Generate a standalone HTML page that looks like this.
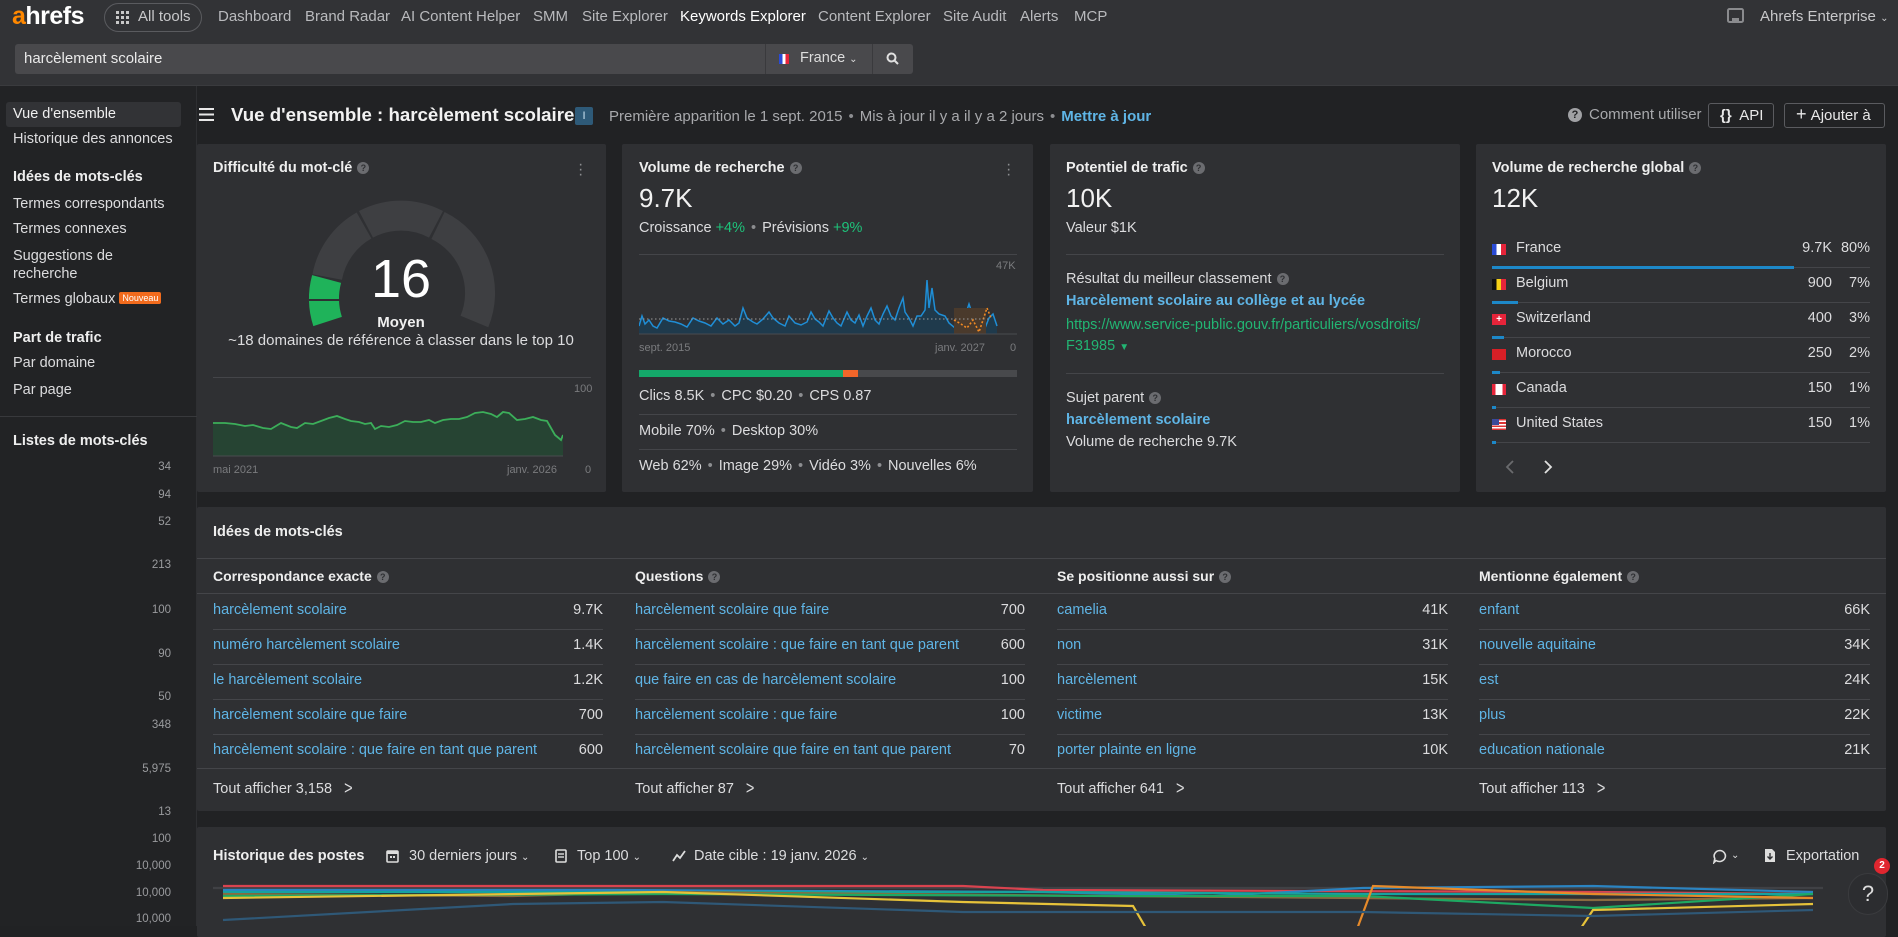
<!DOCTYPE html>
<html><head><meta charset="utf-8"><style>
*{box-sizing:border-box;margin:0;padding:0}
body{width:1898px;height:926px;overflow:hidden;background:#212224;font-family:"Liberation Sans",sans-serif;color:#e4e4e6;position:relative;font-size:15px;line-height:1.3}
.a{position:absolute;white-space:nowrap}
.hdr{position:absolute;left:0;top:0;width:1898px;height:86px;background:#323336;border-bottom:1px solid #3a3b3e}
.nav{top:7px;font-size:15px;color:#b9babd}
.side{position:absolute;left:0;top:86px;width:197px;height:840px;background:#222325;border-right:1px solid #2e2f32}
.si{font-size:14.5px;color:#dcdcde;left:13px}
.sh{font-size:14.5px;font-weight:bold;color:#eee;left:13px}
.num{font-size:11.5px;color:#9a9b9e;right:1727px;text-align:right}
.card{position:absolute;background:#2f3033;border-radius:2px}
.ct{font-size:14.5px;font-weight:bold;color:#eee}
.q{display:inline-block;width:12px;height:12px;border-radius:50%;background:#6b6c70;color:#2f3033;font-size:9px;text-align:center;line-height:12px;font-weight:bold;vertical-align:1px;margin-left:5px}
.big{font-size:26px;color:#f2f2f2}
.t{font-size:14.5px;color:#dcdcde}
.m{color:#8c8d90}
.g{color:#1ec27a}
.lk{color:#5fb5e6}
.hl{position:absolute;height:1px;background:#444549}
.dot{color:#8c8d90;margin:0 6px}
.v{font-size:14.5px;color:#dcdcde;text-align:right}
.btn{position:absolute;border:1px solid #5a5b5f;border-radius:3px;font-size:15px;color:#e8e8e8}
.dots{position:absolute;color:#8c8d90;font-size:16px;line-height:5px;width:4px}
</style></head><body>
<div class="hdr"></div>
<div class="a" style="left:12px;top:0px;font-size:25px;font-weight:bold;color:#fff;letter-spacing:-0.5px"><span style="color:#ff8800">a</span>hrefs</div>
<div class="a" style="left:104px;top:3px;width:98px;height:29px;border:1px solid #5a5b5f;border-radius:15px"></div>
<svg class="a" style="left:116px;top:11px" width="13" height="13" viewBox="0 0 13 13" fill="#c8c8c8"><rect x="0" y="0" width="3" height="3"/><rect x="5" y="0" width="3" height="3"/><rect x="10" y="0" width="3" height="3"/><rect x="0" y="5" width="3" height="3"/><rect x="5" y="5" width="3" height="3"/><rect x="10" y="5" width="3" height="3"/><rect x="0" y="10" width="3" height="3"/><rect x="5" y="10" width="3" height="3"/><rect x="10" y="10" width="3" height="3"/></svg>
<div class="a nav" style="left:138px;color:#c8c8ca">All tools</div>
<div class="a nav" style="left:218px">Dashboard</div>
<div class="a nav" style="left:305px">Brand Radar</div>
<div class="a nav" style="left:401px">AI Content Helper</div>
<div class="a nav" style="left:533px">SMM</div>
<div class="a nav" style="left:582px">Site Explorer</div>
<div class="a nav" style="left:680px;color:#fff">Keywords Explorer</div>
<div class="a nav" style="left:818px">Content Explorer</div>
<div class="a nav" style="left:943px">Site Audit</div>
<div class="a nav" style="left:1020px">Alerts</div>
<div class="a nav" style="left:1074px">MCP</div>
<svg class="a" style="left:1727px;top:8px" width="17" height="16" viewBox="0 0 17 16"><rect x="1" y="1" width="15" height="13" rx="1.5" fill="none" stroke="#8a8b8e" stroke-width="2"/><rect x="5" y="10" width="7" height="4" fill="#8a8b8e"/></svg>
<div class="a nav" style="left:1760px;color:#c8c8ca">Ahrefs Enterprise <span style="font-size:10px">⌄</span></div>

<div class="a" style="left:15px;top:44px;width:750px;height:30px;background:#49494c;border-radius:3px 0 0 3px"></div>
<div class="a" style="left:24px;top:49px;font-size:15px;color:#eaeaea">harcèlement scolaire</div>
<div class="a" style="left:765px;top:44px;width:107px;height:30px;background:#49494c;border-left:1px solid #3a3a3d"></div>
<div class="a" style="left:779px;top:54px;width:10px;height:10px;background:linear-gradient(90deg,#2a4bd6 33%,#fff 33% 66%,#e6243a 66%)"></div>
<div class="a" style="left:800px;top:49px;font-size:14.5px;color:#ddd">France <span style="font-size:10px">⌄</span></div>
<div class="a" style="left:872px;top:44px;width:41px;height:30px;background:#49494c;border-left:1px solid #3a3a3d;border-radius:0 3px 3px 0"></div>
<svg class="a" style="left:886px;top:52px" width="13" height="13" viewBox="0 0 13 13"><circle cx="5.5" cy="5.5" r="4" fill="none" stroke="#e0e0e0" stroke-width="2"/><line x1="8.5" y1="8.5" x2="12" y2="12" stroke="#e0e0e0" stroke-width="2"/></svg>

<div class="side"></div>
<div class="a" style="left:6px;top:102px;width:175px;height:25px;background:#323336;border-radius:3px"></div>
<div class="a si" style="top:105px;color:#f0f0f0">Vue d'ensemble</div>
<div class="a si" style="top:130px">Historique des annonces</div>
<div class="a sh" style="top:168px">Idées de mots-clés</div>
<div class="a si" style="top:195px">Termes correspondants</div>
<div class="a si" style="top:220px">Termes connexes</div>
<div class="a si" style="top:247px">Suggestions de</div>
<div class="a si" style="top:265px">recherche</div>
<div class="a si" style="top:290px">Termes globaux <span style="background:#f26b1d;color:#fff;font-size:9px;padding:1px 3px;border-radius:2px;vertical-align:2px">Nouveau</span></div>
<div class="a sh" style="top:329px">Part de trafic</div>
<div class="a si" style="top:354px">Par domaine</div>
<div class="a si" style="top:381px">Par page</div>
<div class="hl" style="left:0;top:416px;width:197px;background:#38393c"></div>
<div class="a sh" style="top:432px">Listes de mots-clés</div>
<div class="a num" style="top:460px">34</div><div class="a num" style="top:488px">94</div><div class="a num" style="top:515px">52</div><div class="a num" style="top:558px">213</div><div class="a num" style="top:603px">100</div><div class="a num" style="top:647px">90</div><div class="a num" style="top:690px">50</div><div class="a num" style="top:718px">348</div><div class="a num" style="top:762px">5,975</div><div class="a num" style="top:805px">13</div><div class="a num" style="top:832px">100</div><div class="a num" style="top:859px">10,000</div><div class="a num" style="top:886px">10,000</div><div class="a num" style="top:912px">10,000</div>

<!-- title row -->
<svg class="a" style="left:199px;top:108px" width="15" height="13" viewBox="0 0 15 13" fill="#e8e8e8"><rect y="0" width="15" height="2"/><rect y="5.5" width="15" height="2"/><rect y="11" width="15" height="2"/></svg>
<div class="a" style="left:231px;top:103px;font-size:18.7px;font-weight:bold;color:#f2f2f2">Vue d'ensemble : harcèlement scolaire</div>
<div class="a" style="left:575px;top:107px;width:18px;height:18px;background:#2e5a78;border-radius:2px;color:#cfe6f5;font-size:11px;text-align:center;line-height:18px">I</div>
<div class="a" style="left:609px;top:107px;font-size:15px;color:#a8a9ac">Première apparition le 1 sept. 2015<span class="dot">•</span>Mis à jour il y a il y a 2 jours<span class="dot">•</span><b style="color:#5fb5e6">Mettre à jour</b></div>
<div class="a" style="left:1568px;top:108px;width:14px;height:14px;border-radius:50%;background:#a0a1a4;color:#212224;font-size:11px;font-weight:bold;text-align:center;line-height:14px">?</div>
<div class="a" style="left:1589px;top:105px;font-size:15px;color:#a8a9ac">Comment utiliser</div>
<div class="btn" style="left:1708px;top:103px;width:66px;height:25px"><span class="a" style="left:11px;top:2px"><b>{}</b>&nbsp; API</span></div>
<div class="btn" style="left:1784px;top:103px;width:101px;height:25px"><span class="a" style="left:11px;top:1px"><span style="font-size:18px;line-height:18px">+</span>&nbsp;Ajouter à</span></div>

<!-- card 1 -->
<div class="card" style="left:197px;top:144px;width:409px;height:348px"></div>
<div class="a ct" style="left:213px;top:159px">Difficulté du mot-clé<span class="q">?</span></div>
<div class="dots" style="left:578px;top:162px">·<br>·<br>·</div>
<svg class="a" style="left:301px;top:191px" width="200" height="150" viewBox="0 0 200 150">
<g fill="none" stroke-width="30">
<path d="M26.6 130.5 A75 75 0 0 1 25.6 88" stroke="#1fb35a"/>
<path d="M26.2 86 A75 75 0 0 1 63 34.5" stroke="#3e3f42"/>
<path d="M65 33.3 A75 75 0 0 1 135 33.3" stroke="#3e3f42"/>
<path d="M137 34.5 A75 75 0 0 1 173.4 130.5" stroke="#3e3f42"/>
</g>
<line x1="8" y1="109" x2="42" y2="109" stroke="#2f3033" stroke-width="2"/>
</svg>
<div class="a" style="left:401px;top:248px;transform:translateX(-50%);font-size:54px;color:#fff;line-height:1.15">16</div>
<div class="a" style="left:401px;top:313px;transform:translateX(-50%);font-size:15px;font-weight:bold;color:#f0f0f0">Moyen</div>
<div class="a" style="left:401px;top:331px;transform:translateX(-50%);font-size:15px;color:#dcdcde">~18 domaines de référence à classer dans le top 10</div>
<div class="hl" style="left:213px;top:377px;width:378px"></div>
<div class="a" style="left:574px;top:382px;font-size:11px;color:#7a7b7e">100</div>
<svg class="a" style="left:213px;top:410px" width="350" height="48" viewBox="0 0 350 48">
<path d="M0 13 L12 13 L22 14 L32 16 L40 15 L50 18 L58 19 L68 13 L78 17 L84 18 L92 13 L100 14 L108 11 L116 8 L124 6 L132 9 L138 11 L146 12 L152 14 L158 13 L162 19 L168 16 L176 17 L184 15 L192 11 L200 12 L208 12 L216 10 L222 13 L230 10 L238 9 L246 9 L254 7 L262 3 L270 2 L278 4 L284 7 L290 2 L296 3 L304 10 L312 9 L320 7 L328 10 L334 11 L342 25 L348 30 L350 25 L350 46 L0 46Z" fill="#264433"/>
<polyline points="0,13 12,13 22,14 32,16 40,15 50,18 58,19 68,13 78,17 84,18 92,13 100,14 108,11 116,8 124,6 132,9 138,11 146,12 152,14 158,13 162,19 168,16 176,17 184,15 192,11 200,12 208,12 216,10 222,13 230,10 238,9 246,9 254,7 262,3 270,2 278,4 284,7 290,2 296,3 304,10 312,9 320,7 328,10 334,11 342,25 348,30 350,25" fill="none" stroke="#3cae5a" stroke-width="1.8"/>
<line x1="0" y1="46" x2="378" y2="46" stroke="#4a4b4f"/>
</svg>
<div class="a" style="left:213px;top:463px;font-size:11px;color:#7a7b7e">mai 2021</div>
<div class="a" style="left:507px;top:463px;font-size:11px;color:#7a7b7e">janv. 2026</div>
<div class="a" style="left:585px;top:463px;font-size:11px;color:#7a7b7e">0</div>

<!-- card 2 -->
<div class="card" style="left:622px;top:144px;width:411px;height:348px"></div>
<div class="a ct" style="left:639px;top:159px">Volume de recherche<span class="q">?</span></div>
<div class="dots" style="left:1006px;top:162px">·<br>·<br>·</div>
<div class="a big" style="left:639px;top:182px">9.7K</div>
<div class="a t" style="left:639px;top:219px">Croissance <span class="g">+4%</span><span class="dot">•</span>Prévisions <span class="g">+9%</span></div>
<div class="hl" style="left:639px;top:254px;width:378px"></div>
<div class="a" style="left:996px;top:259px;font-size:11px;color:#7a7b7e">47K</div>
<svg class="a" style="left:639px;top:268px" width="380" height="68" viewBox="0 0 380 68">
<path d="M0 58 L3 48 L6 56 L10 52 L14 58 L18 60 L24 50 L30 53 L36 54 L42 56 L48 59 L54 50 L60 53 L66 55 L72 58 L78 50 L84 56 L90 52 L96 58 L100 55 L104 40 L108 50 L114 54 L118 56 L124 51 L130 44 L134 50 L140 55 L146 58 L150 48 L156 55 L162 57 L168 54 L172 44 L176 51 L180 54 L184 58 L190 43 L194 50 L198 55 L202 58 L208 44 L212 52 L216 55 L220 47 L224 58 L228 48 L232 40 L236 52 L240 56 L244 46 L248 38 L252 48 L256 52 L260 40 L264 30 L266 44 L270 50 L274 58 L278 48 L282 48 L286 42 L288 12 L290 40 L293 20 L296 42 L300 46 L306 48 L310 55 L316 60 L322 56 L326 48 L330 36 L334 48 L338 56 L342 56 L346 60 L350 50 L354 46 L358 58 L358 66 L0 66Z" fill="#1f3a4c"/>
<polyline points="0,58 3,48 6,56 10,52 14,58 18,60 24,50 30,53 36,54 42,56 48,59 54,50 60,53 66,55 72,58 78,50 84,56 90,52 96,58 100,55 104,40 108,50 114,54 118,56 124,51 130,44 134,50 140,55 146,58 150,48 156,55 162,57 168,54 172,44 176,51 180,54 184,58 190,43 194,50 198,55 202,58 208,44 212,52 216,55 220,47 224,58 228,48 232,40 236,52 240,56 244,46 248,38 252,48 256,52 260,40 264,30 266,44 270,50 274,58 278,48 282,48 286,42 288,12 290,40 293,20 296,42 300,46 306,48 310,55 316,60 322,56 326,48 330,36 334,48 338,56 342,56 346,60 350,50 354,46 358,58" fill="none" stroke="#1f8ed6" stroke-width="1.5"/>
<rect x="315" y="40" width="32" height="26" fill="#4a3a2c"/>
<polyline points="315,52 322,56 328,60 334,52 340,64 344,52 348,40 352,50" fill="none" stroke="#f08a24" stroke-width="1.6" stroke-dasharray="2 2"/>
<line x1="0" y1="51" x2="350" y2="51" stroke="#9a9a9a" stroke-dasharray="1.5 2.5"/>
<line x1="0" y1="66" x2="378" y2="66" stroke="#4a4b4f"/>
</svg>
<div class="a" style="left:639px;top:341px;font-size:11px;color:#7a7b7e">sept. 2015</div>
<div class="a" style="left:935px;top:341px;font-size:11px;color:#7a7b7e">janv. 2027</div>
<div class="a" style="left:1010px;top:341px;font-size:11px;color:#7a7b7e">0</div>
<div class="a" style="left:639px;top:370px;width:378px;height:7px;background:#48494c"></div>
<div class="a" style="left:639px;top:370px;width:204px;height:7px;background:#14a86a"></div>
<div class="a" style="left:843px;top:370px;width:15px;height:7px;background:#f2662a"></div>
<div class="a t" style="left:639px;top:387px">Clics 8.5K<span class="dot">•</span>CPC $0.20<span class="dot">•</span>CPS 0.87</div>
<div class="hl" style="left:639px;top:414px;width:378px"></div>
<div class="a t" style="left:639px;top:422px">Mobile 70%<span class="dot">•</span>Desktop 30%</div>
<div class="hl" style="left:639px;top:449px;width:378px"></div>
<div class="a t" style="left:639px;top:457px">Web 62%<span class="dot">•</span>Image 29%<span class="dot">•</span>Vidéo 3%<span class="dot">•</span>Nouvelles 6%</div>

<!-- card 3 -->
<div class="card" style="left:1050px;top:144px;width:410px;height:348px"></div>
<div class="a ct" style="left:1066px;top:159px">Potentiel de trafic<span class="q">?</span></div>
<div class="a big" style="left:1066px;top:182px">10K</div>
<div class="a t" style="left:1066px;top:219px">Valeur $1K</div>
<div class="hl" style="left:1066px;top:254px;width:378px"></div>
<div class="a t" style="left:1066px;top:270px">Résultat du meilleur classement<span class="q">?</span></div>
<div class="a t lk" style="left:1066px;top:292px;font-weight:bold">Harcèlement scolaire au collège et au lycée</div>
<div class="a t g" style="left:1066px;top:316px;color:#22b573">https://www.service-public.gouv.fr/particuliers/vosdroits/</div>
<div class="a t g" style="left:1066px;top:337px;color:#22b573">F31985 <span style="font-size:10px">▼</span></div>
<div class="hl" style="left:1066px;top:373px;width:378px"></div>
<div class="a t" style="left:1066px;top:389px">Sujet parent<span class="q">?</span></div>
<div class="a t lk" style="left:1066px;top:411px;font-weight:bold">harcèlement scolaire</div>
<div class="a t" style="left:1066px;top:433px">Volume de recherche 9.7K</div>

<!-- card 4 -->
<div class="card" style="left:1476px;top:144px;width:410px;height:348px"></div>
<div class="a ct" style="left:1492px;top:159px">Volume de recherche global<span class="q">?</span></div>
<div class="a big" style="left:1492px;top:182px">12K</div>
<div style="position:absolute;left:1492px;top:240px;width:378px">
 <div class="hl" style="left:0;top:27px;width:378px"></div><div class="a" style="left:0;top:26px;width:302px;height:3px;background:#1d88c8"></div>
 <div class="hl" style="left:0;top:62px;width:378px"></div><div class="a" style="left:0;top:61px;width:26px;height:3px;background:#1d88c8"></div>
 <div class="hl" style="left:0;top:97px;width:378px"></div><div class="a" style="left:0;top:96px;width:12px;height:3px;background:#1d88c8"></div>
 <div class="hl" style="left:0;top:132px;width:378px"></div><div class="a" style="left:0;top:131px;width:8px;height:3px;background:#1d88c8"></div>
 <div class="hl" style="left:0;top:167px;width:378px"></div><div class="a" style="left:0;top:166px;width:4px;height:3px;background:#1d88c8"></div>
 <div class="hl" style="left:0;top:202px;width:378px"></div><div class="a" style="left:0;top:201px;width:4px;height:3px;background:#1d88c8"></div>
</div>
<div class="a" style="left:1492px;top:244px;width:14px;height:11px;background:linear-gradient(90deg,#2a4bd6 33%,#fff 33% 66%,#e6243a 66%)"></div>
<div class="a" style="left:1492px;top:279px;width:14px;height:11px;background:linear-gradient(90deg,#111 33%,#f7d117 33% 66%,#e6243a 66%)"></div>
<div class="a" style="left:1492px;top:314px;width:14px;height:11px;background:#e6243a;color:#fff;font-size:10px;line-height:11px;text-align:center;font-weight:bold">+</div>
<div class="a" style="left:1492px;top:349px;width:14px;height:11px;background:#d81f26"></div>
<div class="a" style="left:1492px;top:384px;width:14px;height:11px;background:linear-gradient(90deg,#e6243a 25%,#fff 25% 75%,#e6243a 75%)"></div>
<div class="a" style="left:1492px;top:419px;width:14px;height:11px;background:repeating-linear-gradient(180deg,#d33 0 1.6px,#fff 1.6px 3.2px)"><div style="width:7px;height:6px;background:#3b4a9a"></div></div>
<div class="a t" style="left:1516px;top:239px">France</div><div class="a v" style="right:66px;top:239px">9.7K</div><div class="a v m" style="right:28px;top:239px">80%</div>
<div class="a t" style="left:1516px;top:274px">Belgium</div><div class="a v" style="right:66px;top:274px">900</div><div class="a v m" style="right:28px;top:274px">7%</div>
<div class="a t" style="left:1516px;top:309px">Switzerland</div><div class="a v" style="right:66px;top:309px">400</div><div class="a v m" style="right:28px;top:309px">3%</div>
<div class="a t" style="left:1516px;top:344px">Morocco</div><div class="a v" style="right:66px;top:344px">250</div><div class="a v m" style="right:28px;top:344px">2%</div>
<div class="a t" style="left:1516px;top:379px">Canada</div><div class="a v" style="right:66px;top:379px">150</div><div class="a v m" style="right:28px;top:379px">1%</div>
<div class="a t" style="left:1516px;top:414px">United States</div><div class="a v" style="right:66px;top:414px">150</div><div class="a v m" style="right:28px;top:414px">1%</div>
<svg class="a" style="left:1504px;top:459px" width="50" height="16" viewBox="0 0 50 16" fill="none" stroke-width="1.8"><path d="M9 2 L3 8 L9 14" stroke="#6a6b6e"/><path d="M41 2 L47 8 L41 14" stroke="#e0e0e0"/></svg>

<!-- ideas -->
<div class="card" style="left:197px;top:507px;width:1689px;height:304px"></div>
<div class="a ct" style="left:213px;top:523px">Idées de mots-clés</div>
<div class="hl" style="left:197px;top:558px;width:1689px"></div>
<div class="hl" style="left:197px;top:593px;width:1689px"></div>
<div class="hl" style="left:197px;top:768px;width:1689px"></div>
<div class="a ct" style="left:213px;top:567px;font-size:14px">Correspondance exacte<span class="q">?</span></div>
<div class="a ct" style="left:635px;top:567px;font-size:14px">Questions<span class="q">?</span></div>
<div class="a ct" style="left:1057px;top:567px;font-size:14px">Se positionne aussi sur<span class="q">?</span></div>
<div class="a ct" style="left:1479px;top:567px;font-size:14px">Mentionne également<span class="q">?</span></div>
<div id="cols"></div>
<script>
var cols=[[213,603,[["harcèlement scolaire","9.7K"],["numéro harcèlement scolaire","1.4K"],["le harcèlement scolaire","1.2K"],["harcèlement scolaire que faire","700"],["harcèlement scolaire : que faire en tant que parent","600"]],"Tout afficher 3,158"],
[635,1025,[["harcèlement scolaire que faire","700"],["harcèlement scolaire : que faire en tant que parent","600"],["que faire en cas de harcèlement scolaire","100"],["harcèlement scolaire : que faire","100"],["harcèlement scolaire que faire en tant que parent","70"]],"Tout afficher 87"],
[1057,1448,[["camelia","41K"],["non","31K"],["harcèlement","15K"],["victime","13K"],["porter plainte en ligne","10K"]],"Tout afficher 641"],
[1479,1870,[["enfant","66K"],["nouvelle aquitaine","34K"],["est","24K"],["plus","22K"],["education nationale","21K"]],"Tout afficher 113"]];
var h="";var ys=[601,636,671,706,741];
cols.forEach(function(c){c[2].forEach(function(r,i){h+='<div class="a t lk" style="left:'+c[0]+'px;top:'+ys[i]+'px;font-size:14.5px">'+r[0]+'</div><div class="a v" style="right:'+(1898-c[1])+'px;top:'+ys[i]+'px">'+r[1]+'</div>';if(i<4)h+='<div class="hl" style="left:'+c[0]+'px;top:'+(ys[i]+28)+'px;width:'+(c[1]-c[0])+'px"></div>';});
h+='<div class="a t" style="left:'+c[0]+'px;top:780px">'+c[3]+' <span style="margin-left:8px;display:inline-block;transform:scaleY(1.3)">&gt;</span></div>';});
document.getElementById("cols").innerHTML=h;
</script>

<!-- history -->
<div class="card" style="left:197px;top:827px;width:1689px;height:110px"></div>
<div class="a ct" style="left:213px;top:847px">Historique des postes</div>
<svg class="a" style="left:386px;top:849px" width="13" height="14" viewBox="0 0 13 14"><rect x="1" y="2" width="11" height="11" rx="1" fill="none" stroke="#ddd" stroke-width="1.6"/><rect x="1" y="2" width="11" height="3" fill="#ddd"/><rect x="4" y="7" width="2" height="2" fill="#ddd"/><rect x="7" y="7" width="2" height="2" fill="#ddd"/></svg>
<div class="a t" style="left:409px;top:847px">30 derniers jours <span style="font-size:10px">⌄</span></div>
<svg class="a" style="left:555px;top:849px" width="12" height="14" viewBox="0 0 12 14"><rect x="1" y="1" width="10" height="12" rx="1" fill="none" stroke="#ddd" stroke-width="1.6"/><line x1="3" y1="5" x2="9" y2="5" stroke="#ddd" stroke-width="1.4"/><line x1="3" y1="8" x2="9" y2="8" stroke="#ddd" stroke-width="1.4"/></svg>
<div class="a t" style="left:577px;top:847px">Top 100 <span style="font-size:10px">⌄</span></div>
<svg class="a" style="left:672px;top:850px" width="14" height="12" viewBox="0 0 14 12"><polyline points="1,11 5,5 8,8 13,1" fill="none" stroke="#ddd" stroke-width="1.8"/></svg>
<div class="a t" style="left:694px;top:847px">Date cible : 19 janv. 2026 <span style="font-size:10px">⌄</span></div>
<svg class="a" style="left:1712px;top:849px" width="16" height="15" viewBox="0 0 16 15"><path d="M8 1.5 A6 5.5 0 1 1 4 11.5 L2 13.5 L2.8 9.5 A6 5.5 0 0 1 8 1.5Z" fill="none" stroke="#ddd" stroke-width="1.6"/></svg>
<div class="a" style="left:1731px;top:849px;font-size:10px;color:#ddd">⌄</div>
<svg class="a" style="left:1764px;top:848px" width="12" height="15" viewBox="0 0 12 15"><path d="M1 1 H8 L11 4 V14 H1Z" fill="#ddd"/><path d="M6 5 V11 M3.5 8.5 L6 11 L8.5 8.5" stroke="#2f3033" stroke-width="1.4" fill="none"/></svg>
<div class="a t" style="left:1786px;top:847px">Exportation</div>
<svg class="a" style="left:213px;top:880px" width="1610" height="46" viewBox="0 0 1610 46" fill="none" stroke-width="2.2">
<line x1="0" y1="8" x2="1610" y2="8" stroke="#404145"/>
<polyline points="10,6 750,6 830,10 1380,12 1600,14" stroke="#d9434f"/>
<polyline points="10,10 400,10 830,12 1000,16 1150,8 1380,6 1600,12" stroke="#2b84c2"/>
<polyline points="10,12 420,12 830,12 1150,14 1600,14" stroke="#16a2a0"/>
<polyline points="10,14 300,16 450,12 900,16 1380,20 1600,18" stroke="#8a6b3f"/>
<polyline points="10,16 450,14 900,16 1150,16 1380,28 1600,14" stroke="#1ea862"/>
<polyline points="10,18 450,12 750,22 920,26 940,60" stroke="#e6c23a"/>
<polyline points="1140,60 1160,6 1380,14 1600,18" stroke="#e68a2a"/>
<polyline points="1360,60 1380,30 1600,24" stroke="#e6c23a"/>
<polyline points="10,40 300,24 450,22 750,32 1150,32 1380,36 1600,30" stroke="#2f5877"/>
</svg>
<div class="a" style="left:1848px;top:873px;width:40px;height:42px;border-radius:20px;background:#2c2d30;border:1px solid #3a3b3e;color:#ddd;font-size:22px;text-align:center;line-height:40px">?</div>
<div class="a" style="left:1874px;top:858px;width:16px;height:16px;border-radius:50%;background:#e0262f;color:#fff;font-size:10px;font-weight:bold;text-align:center;line-height:16px">2</div>
</body></html>
